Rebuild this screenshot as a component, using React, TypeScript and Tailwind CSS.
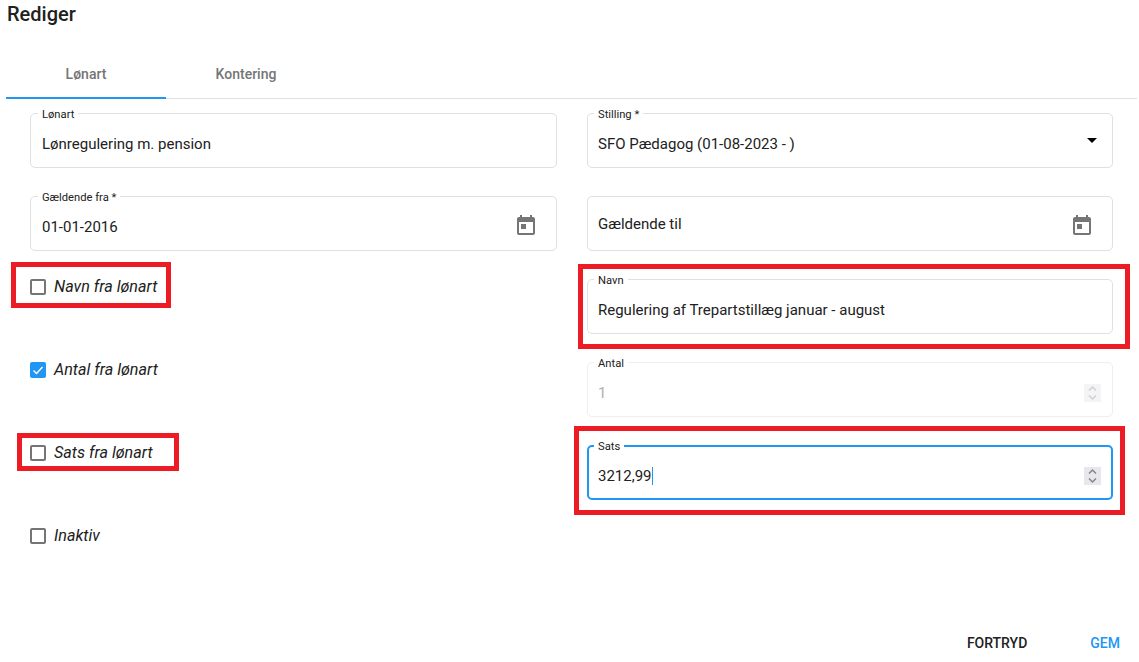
import React from 'react';

const CalendarIcon = () => (
  <svg viewBox="0 0 24 24" className="w-6 h-6 fill-[#757575]">
    <path d="M19 3h-1V1h-2v2H8V1H6v2H5c-1.11 0-1.99.9-1.99 2L3 19c0 1.1.89 2 2 2h14c1.1 0 2-.9 2-2V5c0-1.1-.9-2-2-2zm0 16H5V8h14v11zM7 10h5v5H7z" />
  </svg>
);

const Spinner = ({ disabled }: { disabled?: boolean }) => (
  <div className={`mt-[6px] w-[17px] h-[18px] flex items-center justify-center ${disabled ? 'bg-[#f4f4f6]' : 'bg-[#e8e8ec]'}`}>
    <svg viewBox="0 0 17 18" className={`w-[17px] h-[18px] fill-none stroke-[1.5] ${disabled ? 'stroke-[#cfcfd3]' : 'stroke-[#85858a]'}`}>
      <path d="M5 6.5l3.5-3.5 3.5 3.5M5 11.5l3.5 3.5 3.5-3.5" />
    </svg>
  </div>
);

type FieldProps = {
  label?: string;
  focused?: boolean;
  disabled?: boolean;
  leftCol?: boolean;
  children: React.ReactNode;
  right?: React.ReactNode;
};

const Field = ({ label, focused, disabled, leftCol, children, right }: FieldProps) => (
  <div
    className={`relative h-[55px] rounded-[5px] flex items-center justify-between pr-[10px] ${leftCol ? 'pl-[11px]' : 'pl-[10px]'} ${
      focused ? 'border-2 border-[#2196f3]' : disabled ? 'border border-[#eeeeee]' : 'border border-[#e0e0e0]'
    }`}
  >
    {label && (
      <span
        className={`absolute bg-white px-[4px] text-[11.2px] leading-[12px] text-[#212121] ${
          focused ? '-top-[6px] left-[5px]' : leftCol ? '-top-[5px] left-[7px]' : '-top-[5px] left-[6px]'
        }`}
      >
        {label}
      </span>
    )}
    <div className={`pt-[7px] text-[15px] ${disabled ? 'text-[#b0b0b0]' : 'text-[#212121]'}`}>{children}</div>
    {right}
  </div>
);

const CheckRow = ({ label, checked }: { label: string; checked?: boolean }) => (
  <div className="flex items-start gap-2">
    {checked ? (
      <span className="w-4 h-4 rounded-[2px] bg-[#2196f3] flex items-center justify-center">
        <svg viewBox="0 0 16 16" className="w-4 h-4 fill-none stroke-white stroke-[1.4]">
          <path d="M3.5 8.5l3 3 6-6.5" />
        </svg>
      </span>
    ) : (
      <span className="w-4 h-4 rounded-[2px] border-2 border-[#757575] bg-white" />
    )}
    <span className="text-[16.15px] leading-4 italic text-[#212121]">{label}</span>
  </div>
);

export default function App() {
  return (
    <div className="h-[662px] bg-white flex flex-col font-['Roboto',sans-serif] overflow-hidden">
      <h2 className="pl-[7px] pt-[2px] text-[20px] leading-[24px] font-medium text-[#212121]">Rediger</h2>

      <div className="mt-[25px] ml-[6px] mr-[2px] flex border-b border-[#e0e0e0] h-[48px]">
        <div className="relative w-[160px] flex items-center justify-center text-[14px] font-medium text-[#757575]">
          Lønart
          <span className="absolute left-0 right-0 -bottom-px h-[2px] bg-[#2196f3]" />
        </div>
        <div className="w-[160px] flex items-center justify-center text-[14px] font-medium text-[#757575]">Kontering</div>
      </div>

      <div className="mt-[14px] ml-[30px] w-[1083px] grid grid-cols-[527px_526px] gap-x-[30px] gap-y-[28px] auto-rows-[55px]">
        <Field label="Lønart" leftCol>Lønregulering m. pension</Field>
        <Field
          label="Stilling *"
          right={
            <svg viewBox="0 0 24 24" className="w-6 h-6 -mt-[2px] -mr-[2px] fill-black">
              <path d="M7 10l5 5 5-5z" />
            </svg>
          }
        >
          SFO Pædagog (01-08-2023 - )
        </Field>

        <Field label="Gældende fra *" leftCol right={<span className="mt-[4px] mr-[8px]"><CalendarIcon /></span>}>
          01-01-2016
        </Field>
        <Field right={<span className="mt-[4px] mr-[8px]"><CalendarIcon /></span>}>
          <span className="relative -top-[3px]">Gældende til</span>
        </Field>

        <div className="relative">
          <CheckRow label="Navn fra lønart" />
          <div className="absolute -left-[19px] -top-[17px] w-[160px] h-[46px] border-[5px] border-[#ed1c24]" />
        </div>
        <div className="relative">
          <Field label="Navn">Regulering af Trepartstillæg januar - august</Field>
          <div className="absolute -left-[9px] -top-[15px] w-[552px] h-[85px] border-[5px] border-[#ed1c24]" />
        </div>

        <CheckRow label="Antal fra lønart" checked />
        <Field label="Antal" disabled right={<span className="mr-[1px]"><Spinner disabled /></span>}>
          1
        </Field>

        <div className="relative">
          <CheckRow label="Sats fra lønart" />
          <div className="absolute -left-[13px] -top-[12px] w-[162px] h-[38px] border-[5px] border-[#ed1c24]" />
        </div>
        <div className="relative">
          <Field label="Sats" focused right={<Spinner />}>
            <span className="border-r border-[#2196f3] -ml-px">3212,99</span>
          </Field>
          <div className="absolute -left-[13px] -top-[19px] w-[551px] h-[89px] border-[5px] border-[#ed1c24]" />
        </div>

        <CheckRow label="Inaktiv" />
      </div>

      <div className="mt-auto mb-[8px] flex justify-end text-[14px] font-medium">
        <span className="text-[#212121]">FORTRYD</span>
        <span className="ml-[63px] mr-[19px] text-[#2196f3]">GEM</span>
      </div>
    </div>
  );
}
